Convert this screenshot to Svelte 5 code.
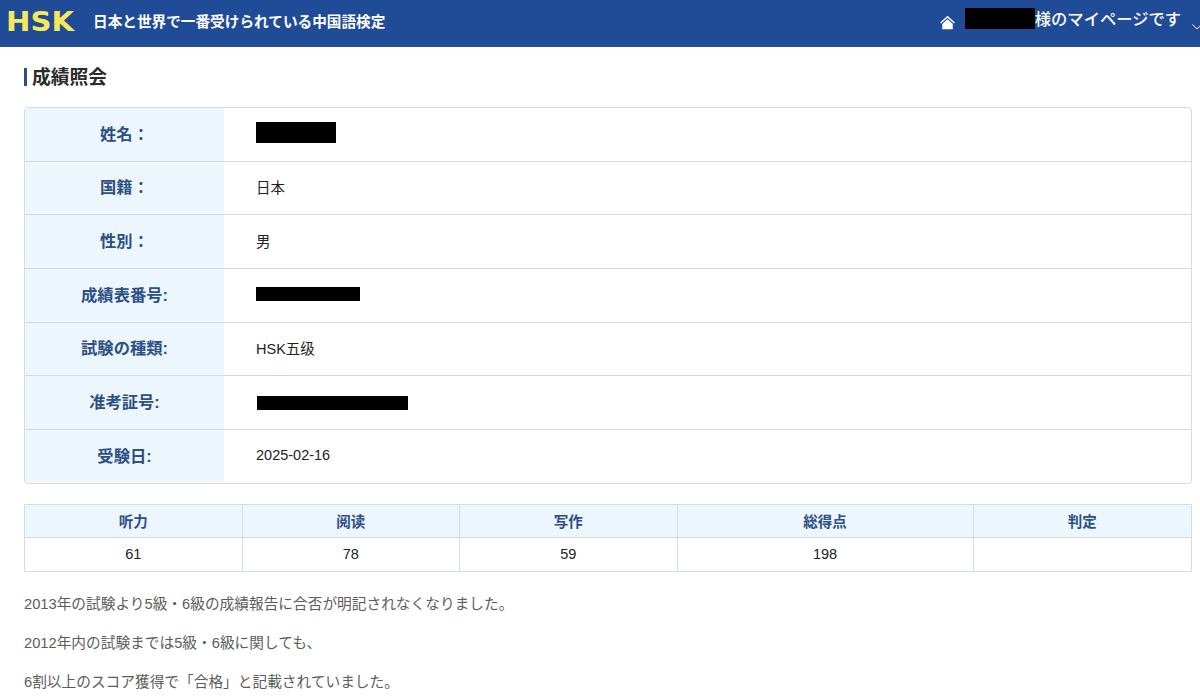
<script>
  const rows = [
    { label: '姓名：', redact: 'r-name' },
    { label: '国籍：', value: '日本' },
    { label: '性別：', value: '男' },
    { label: '成績表番号:', redact: 'r-report' },
    { label: '試験の種類:', value: 'HSK五级' },
    { label: '准考証号:', redact: 'r-exam' },
    { label: '受験日:', value: '2025-02-16' }
  ];
  const scores = [
    { head: '听力', val: '61' },
    { head: '阅读', val: '78' },
    { head: '写作', val: '59' },
    { head: '総得点', val: '198' },
    { head: '判定', val: '' }
  ];
</script>

<header class="top">
  <div class="brand">
    <span class="logo">HSK</span>
    <span class="tagline">日本と世界で一番受けられている中国語検定</span>
  </div>
  <div class="user">
    <svg class="home" viewBox="0 0 16 15" width="15" height="15" aria-hidden="true">
      <path d="M8 0.4 L0.2 7.4 L1.2 8.6 L8 2.5 L14.8 8.6 L15.8 7.4 Z" fill="#fff" />
      <path d="M2.4 9.2 L8 4.1 L13.6 9.2 V14.8 H2.4 Z" fill="#fff" />
    </svg>
    <span class="redact r-user"></span>
    <span class="mypage">様のマイページです</span>
    <svg class="chev" viewBox="0 0 10 6" width="10" height="6" aria-hidden="true">
      <path d="M0.5 0.5 L5 5 L9.5 0.5" fill="none" stroke="#fff" stroke-width="1" />
    </svg>
  </div>
</header>

<main class="page">
  <h1 class="title">成績照会</h1>

  <div class="info">
    {#each rows as row}
      <div class="row">
        <div class="label">{row.label}</div>
        <div class="value">
          {#if row.redact}
            <span class="redact {row.redact}"></span>
          {:else}
            {row.value}
          {/if}
        </div>
      </div>
    {/each}
  </div>

  <div class="scores">
    {#each scores as s}
      <div class="head">{s.head}</div>
    {/each}
    {#each scores as s}
      <div class="cell">{s.val}</div>
    {/each}
  </div>

  <p class="note n1">2013年の試験より5級・6級の成績報告に合否が明記されなくなりました。</p>
  <p class="note">2012年内の試験までは5級・6級に関しても、</p>
  <p class="note">6割以上のスコア獲得で「合格」と記載されていました。</p>
</main>

<style>
  :global(body) {
    margin: 0;
    background: #fff;
    overflow: hidden;
    font-family: "Liberation Sans", "Noto Sans CJK JP", sans-serif;
  }
  .top {
    height: 47px;
    box-sizing: border-box;
    background: #1f4b97;
    border-bottom: 1px solid #2c4f86;
    display: flex;
    align-items: center;
    justify-content: space-between;
    color: #fff;
  }
  .brand {
    display: flex;
    align-items: center;
    padding-left: 6px;
    margin-bottom: 3px;
  }
  .logo {
    font-family: "DejaVu Sans", sans-serif;
    font-weight: 700;
    font-size: 27px;
    line-height: 30px;
    color: #f6e85a;
    display: inline-block;
    width: 87px;
    transform: scaleX(1.08);
    transform-origin: left center;
  }
  .tagline {
    font-size: 14.65px;
    font-weight: 700;
    line-height: 20px;
  }
  .user {
    display: flex;
    align-items: center;
    margin-bottom: 9px;
  }
  .home {
    margin-right: 10px;
    margin-top: 8px;
  }
  .redact {
    display: block;
    background: #000;
  }
  .r-user {
    width: 70px;
    height: 21px;
  }
  .mypage {
    font-size: 16.3px;
    font-weight: 500;
    line-height: 22px;
  }
  .chev {
    margin-left: 11px;
    margin-right: -2px;
    margin-top: 16px;
  }
  .page {
    padding: 0 8px 0 24px;
  }
  .title {
    margin: 0;
    height: 60px;
    box-sizing: border-box;
    padding-top: 21px;
    font-size: 18.75px;
    line-height: 20px;
    font-weight: 700;
    color: #2b2b2b;
    position: relative;
    text-indent: 8px;
  }
  .title::before {
    content: "";
    position: absolute;
    left: 0;
    top: 21px;
    width: 3px;
    height: 18px;
    background: #2c4f86;
  }
  .info {
    border: 1px solid #d3dbe4;
    border-radius: 4px;
    overflow: hidden;
    height: 376.5px;
    box-sizing: border-box;
    display: flex;
    flex-direction: column;
  }
  .row {
    flex: 1;
    display: flex;
    border-top: 1px solid #d3d9e0;
  }
  .row:first-child {
    border-top: 0;
  }
  .label {
    width: 199px;
    flex: none;
    box-sizing: border-box;
    padding-bottom: 3px;
    background: #edf5fd;
    color: #2c4f86;
    font-size: 16.3px;
    font-weight: 700;
    display: flex;
    align-items: center;
    justify-content: center;
  }
  .value {
    padding-left: 32px;
    padding-bottom: 3px;
    font-size: 14.5px;
    color: #222;
    display: flex;
    align-items: center;
  }
  .r-name { width: 80px; height: 21px; }
  .r-report { width: 104px; height: 14px; }
  .r-exam { width: 151px; height: 14px; margin-left: 1px; margin-top: 4px; }
  .scores {
    margin-top: 20.5px;
    display: grid;
    grid-template-columns: 216.5px 217.5px 217.5px 296px 1fr;
    grid-template-rows: 33px 32.5px;
    border: 1px solid #d3dbe4;
    width: 1168px;
    box-sizing: border-box;
  }
  .head, .cell {
    display: flex;
    align-items: center;
    justify-content: center;
    box-sizing: border-box;
    border-left: 1px solid #d3dbe4;
    font-size: 14.5px;
  }
  .head:nth-child(5n+1), .cell:nth-child(5n+1) {
    border-left: 0;
  }
  .head {
    background: #edf5fd;
    color: #2c4f86;
    font-weight: 700;
    padding-bottom: 2px;
    border-bottom: 1px solid #d3dbe4;
  }
  .cell {
    color: #222;
    background: #fff;
  }
  .note {
    margin: 19px 0 0;
    font-size: 14.7px;
    line-height: 20px;
    color: #5c5c5c;
  }
  .n1 {
    margin-top: 22px;
  }
</style>
